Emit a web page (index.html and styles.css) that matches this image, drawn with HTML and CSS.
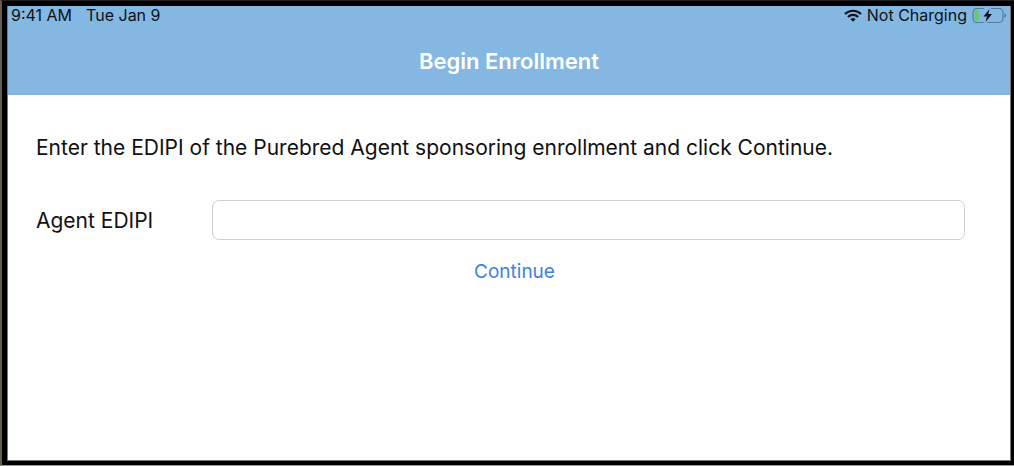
FILE: index.html
```html
<!DOCTYPE html>
<html lang="en">
<head>
<meta charset="utf-8">
<title>Begin Enrollment</title>
<link rel="stylesheet" href="styles.css">
</head>
<body>
<div class="device">
<div class="screen">
  <header class="top">
    <div class="status">
      <div class="status-group status-left"><span>9:41 AM</span><span>Tue Jan 9</span></div>
      <div class="status-group status-right">
        <svg class="wifi" viewBox="0 0 18 13" aria-hidden="true"><path d="M1 5a11.500 11.500 0 0 1 16 0M3.900 8a7.200 7.200 0 0 1 10.200 0" fill="none" stroke="#0b1218" stroke-width="2.200"/><path d="M9 12.700L6.400 10.200a3.800 3.800 0 0 1 5.200 0z" fill="#0b1218"/></svg>
        <span>Not Charging</span>
        <svg class="battery" viewBox="0 0 35 17" aria-hidden="true"><path d="M12 1.500H5a4 4 0 0 0-4 4v6a4 4 0 0 0 4 4h7M19 1.500h8a4 4 0 0 1 4 4v6a4 4 0 0 1-4 4h-12" fill="none" stroke="#557c9b" stroke-width="1.200"/><rect x="2.500" y="3" width="4.500" height="11" rx="2" fill="#68c878"/><path d="M32.500 6v5q1.700-1 1.700-2.500t-1.700-2.500z" fill="#557c9b"/><path d="M17.500 2l-6 7.500h3.500l-1.500 5.500 6.500-8h-3.700z" fill="#0b1218"/></svg>
      </div>
    </div>
    <h1 class="title">Begin Enrollment</h1>
  </header>
  <main class="content">
    <p class="intro">Enter the EDIPI of the Purebred Agent sponsoring enrollment and click Continue.</p>
    <form class="form">
      <div class="field"><label class="label" for="edipi">Agent EDIPI</label><input class="input" id="edipi" type="text"></div>
      <button class="continue" type="button">Continue</button>
    </form>
  </main>
</div>
</div>
</body>
</html>
```

FILE: styles.css
```css
* { box-sizing: border-box; }
body { margin: 0; color: #111; font-family: Inter, "Liberation Sans", sans-serif; }
.device { min-height: 100vh; display: flex; padding: 5px 3px 4px 5px; background: #000; border: solid; border-width: 1px 0 1px 2px; border-color: #202020 #202020 #999 #655d50; }
.screen { flex: 1; min-width: 0; display: flex; flex-direction: column; border: solid #777; border-width: 0 1px 1px; background: #fefefe; }
.top { background: #84b8e2; height: 89px; }
.status { display: flex; justify-content: space-between; padding: 0 3px; color: #0b1218; font-size: 16px; line-height: 19px; }
.status-group { display: flex; align-items: center; }
.status-left { gap: 14px; }
.status-right { gap: 5px; }
.wifi { width: 18px; height: 13px; }
.battery { width: 35px; height: 17px; }
.title { margin: 21px 0 0; text-align: center; color: #fff; font-size: 22px; line-height: 30px; font-weight: 600; }
.content { padding: 39px 45px 0 28px; }
.intro { margin: 0; font-size: 21px; line-height: 28px; }
.form { display: flex; flex-direction: column; align-items: center; margin-top: 38px; }
.field { display: flex; align-items: center; width: 100%; }
.label { flex: 0 0 176px; font-size: 21px; }
.input { flex: 1; min-width: 0; height: 40px; border: 1px solid #d0d0d3; border-radius: 7px; background: #fff; padding: 0 10px; font: inherit; font-size: 21px; }
.continue { margin: 16px 0 0 28px; border: 0; padding: 4px 8px; background: none; color: #3c82e0; font: inherit; font-size: 19px; line-height: 24px; }
```
